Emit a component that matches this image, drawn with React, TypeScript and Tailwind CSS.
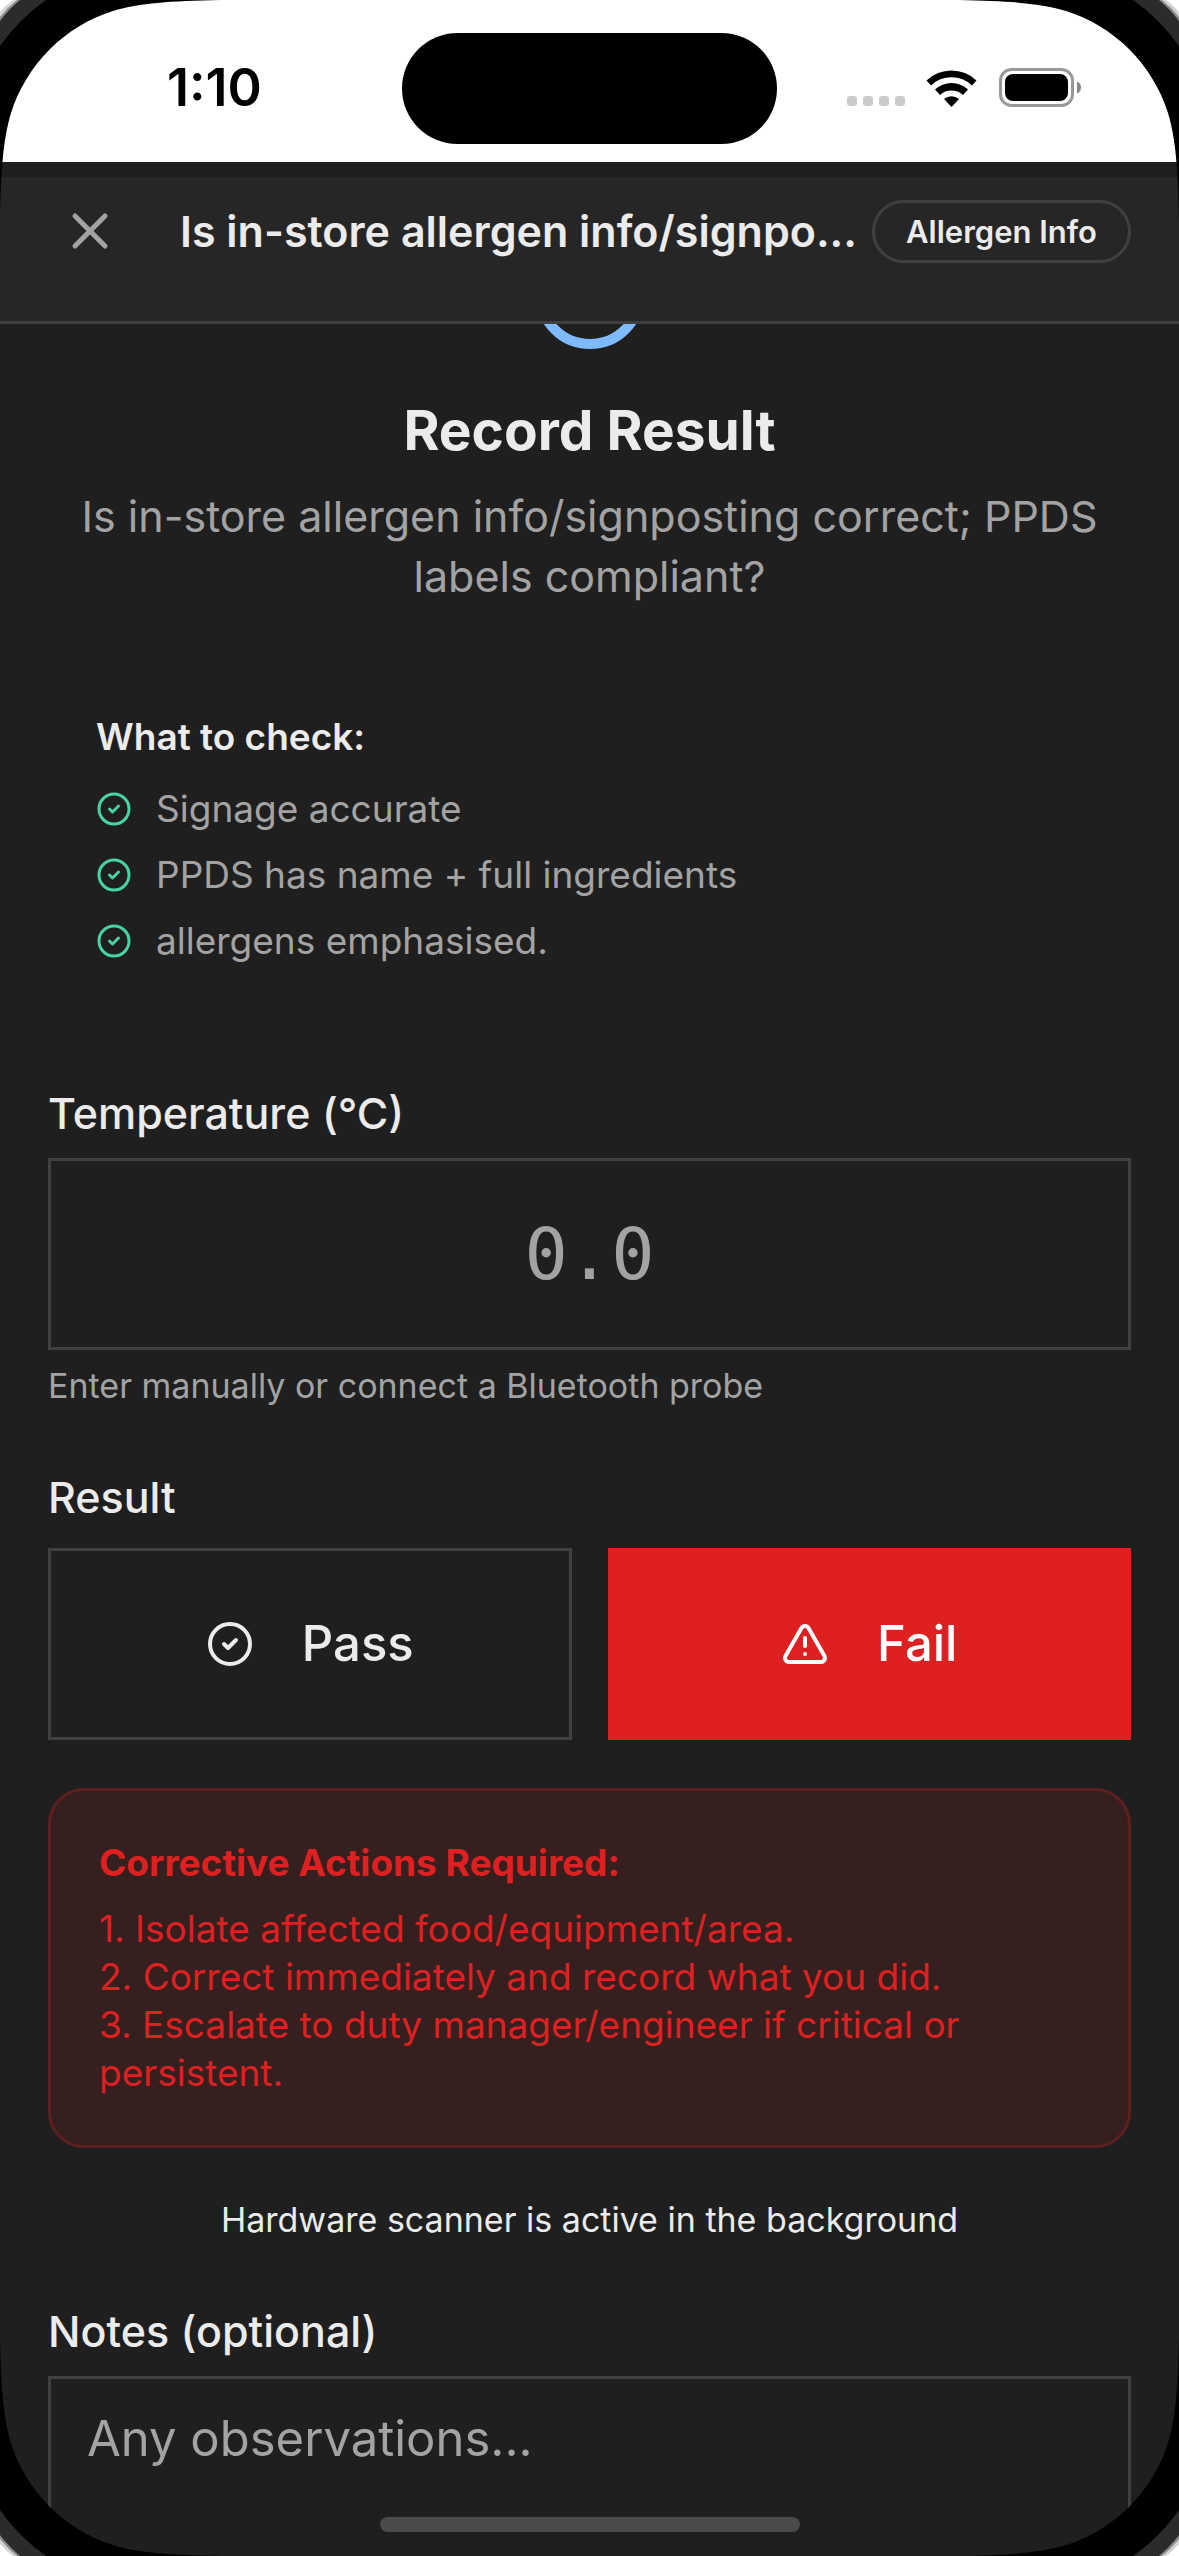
import React, { useState } from 'react'
import { CircleCheck, TriangleAlert, X } from 'lucide-react'
import { clsx } from 'clsx'

type ResultValue = 'pass' | 'fail'

const checks = ['Signage accurate', 'PPDS has name + full ingredients', 'allergens emphasised.']

const correctiveActions = [
  '1. Isolate affected food/equipment/area.',
  '2. Correct immediately and record what you did.',
  '3. Escalate to duty manager/engineer if critical or persistent.',
]

const question = 'Is in-store allergen info/signposting correct; PPDS labels compliant?'

// Keep the header title on one line next to the category pill
const shorten = (text: string, max: number) =>
  text.length > max ? `${text.slice(0, max)}...` : text

// One corner of the device frame, drawn for the top left and flipped for the others
function FrameCorner({ className }: { className: string }) {
  return (
    <svg
      viewBox="0 0 220 220"
      aria-hidden="true"
      className={clsx('pointer-events-none absolute z-20 h-[220px] w-[220px]', className)}
    >
      <path d="M0 0H220C170 1 140 3 113 11C90 18 67 32 50 49C32 67 18 90 11 113C3 140 1 170 0 220Z" fill="#000" />
      <path d="M0 0H46Q20 18 0 46Z" fill="#2b2b2b" />
      <path d="M0 0H20Q9 9 0 21Z" fill="#8a8a8a" />
      <path d="M0 0H17Q8 7 0 17Z" fill="#d4d4d4" />
      <path d="M0 0H13Q6 5 0 12Z" fill="#fff" />
    </svg>
  )
}

function WifiIcon() {
  return (
    <svg viewBox="0 0 51 38" className="h-[38px] w-[51px]" aria-hidden="true">
      <path
        d="M0.500 11.500A36 36 0 0 1 50.500 11.500L46 16.500A29.500 29.500 0 0 0 5 16.500Z"
        fill="#000"
      />
      <path d="M9 20.500A24 24 0 0 1 42 20.500L37 26A17 17 0 0 0 14 26Z" fill="#000" />
      <path d="M18 30A11.500 11.500 0 0 1 33 30L25.500 38Z" fill="#000" />
    </svg>
  )
}

function BatteryIcon() {
  return (
    <svg viewBox="0 0 83 40" className="h-10 w-[83px]" aria-hidden="true">
      <rect x="1.500" y="1.500" width="72" height="36" rx="11" fill="none" stroke="#999" strokeWidth="3" />
      <rect x="6" y="6" width="63" height="27" rx="8" fill="#000" />
      <path d="M78 13.500Q82 15 82 19.500T78 25.500Z" fill="#888" />
    </svg>
  )
}

function StatusBar() {
  return (
    <div className="grid h-[162px] shrink-0 grid-cols-[1fr_375px_1fr] items-start bg-white pt-[33px]">
      <div className="flex h-[110px] items-center pl-[167px]">
        <span className="text-[52px] leading-[60px] font-semibold text-black">1:10</span>
      </div>
      <div className="h-[111px] rounded-full bg-black" />
      <div className="flex h-[110px] items-center justify-end pr-[97px]">
        <div className="mt-[26px] mr-[21px] flex gap-[6px]">
          {[0, 1, 2, 3].map((dot) => (
            <span key={dot} className="h-[10px] w-[10px] rounded-[3px] bg-[#cccccc]" />
          ))}
        </div>
        <WifiIcon />
        <div className="ml-[22px]">
          <BatteryIcon />
        </div>
      </div>
    </div>
  )
}

export default function App() {
  const [result, setResult] = useState<ResultValue>('fail')
  const [temperature, setTemperature] = useState('')
  const [notes, setNotes] = useState('')

  return (
    <div className="relative flex h-screen flex-col overflow-hidden bg-[#1f1f1f] font-[Inter,'Liberation_Sans',sans-serif] text-[#ebebeb]">
      <StatusBar />

      <header className="mt-[15px] flex shrink-0 items-center justify-between border-b-[3px] border-[#404040] bg-[#262626] px-12 pt-3 pb-12">
        <div className="flex items-center gap-12">
          <button type="button" aria-label="Close" className="shrink-0 p-3 text-[#a3a3a3]">
            <X size={60} strokeWidth={2} />
          </button>
          <h1 className="text-[43px] leading-[60px] font-semibold whitespace-nowrap">
            {shorten(question, 32)}
          </h1>
        </div>
        <span className="shrink-0 rounded-full border-[3px] border-[#404040] px-[31px] text-[31px] leading-[57px] font-semibold">
          Allergen Info
        </span>
      </header>

      <main className="flex min-h-0 flex-1 flex-col overflow-hidden px-12">
        <div className="-mt-[90px] flex flex-col items-center text-center">
          <CircleCheck size={120} className="shrink-0 text-[#7fbaff]" />
          <h2 className="mt-[43px] text-[55px] leading-[66px] font-bold">Record Result</h2>
          <p className="mt-[23px] text-[43px] leading-[60px] text-[#a3a3a3]">{question}</p>
        </div>

        <section className="mt-[107px] px-12 text-[37px] leading-[48px]">
          <h3 className="font-semibold">What to check:</h3>
          <ul className="mt-6 flex flex-col gap-[18px] text-[#a3a3a3]">
            {checks.map((item) => (
              <li key={item} className="flex items-center gap-6">
                <CircleCheck size={36} className="shrink-0 text-[#47d4a0]" />
                {item}
              </li>
            ))}
          </ul>
        </section>

        <div className="mt-[118px] flex flex-col">
          <label htmlFor="temperature" className="text-[43px] leading-[60px] font-medium">
            Temperature (°C)
          </label>
          <input
            id="temperature"
            inputMode="decimal"
            placeholder="0.0"
            value={temperature}
            onChange={(e) => setTemperature(e.target.value)}
            className="mt-[15px] h-[192px] w-full border-[3px] border-[#404040] bg-transparent text-center font-['DejaVu_Sans_Mono','Liberation_Mono',monospace] text-[72px] outline-none placeholder:text-[#a3a3a3]"
          />
          <p className="mt-3 text-[34px] leading-[48px] text-[#a3a3a3]">
            Enter manually or connect a Bluetooth probe
          </p>
        </div>

        <div className="mt-[57px]" role="group" aria-labelledby="result-label">
          <p id="result-label" className="text-[43px] leading-[60px] font-medium">
            Result
          </p>
          <div className="mt-[21px] grid grid-cols-2 gap-9">
            <button
              type="button"
              aria-pressed={result === 'pass'}
              onClick={() => setResult('pass')}
              className={clsx(
                'flex h-[192px] items-center justify-center gap-12 border-[3px] text-[49px] font-medium',
                result === 'pass' ? 'border-[#16a34a] bg-[#16a34a] text-white' : 'border-[#404040]',
              )}
            >
              <CircleCheck size={48} />
              Pass
            </button>
            <button
              type="button"
              aria-pressed={result === 'fail'}
              onClick={() => setResult('fail')}
              className={clsx(
                'flex h-[192px] items-center justify-center gap-12 border-[3px] text-[49px] font-medium',
                result === 'fail' ? 'border-[#de2021] bg-[#de2021] text-white' : 'border-[#404040]',
              )}
            >
              <TriangleAlert size={48} />
              Fail
            </button>
          </div>
        </div>

        {result === 'fail' && (
          <section className="mt-12 rounded-[36px] border-[3px] border-[#5e1f20] bg-[#36201f] p-12 text-[37px] leading-[48px] text-[#de2021]">
            <h3 className="font-bold">Corrective Actions Required:</h3>
            <ul className="mt-[18px]">
              {correctiveActions.map((action) => (
                <li key={action}>{action}</li>
              ))}
            </ul>
          </section>
        )}

        <p className="mt-12 text-center text-[34px] leading-[48px]">
          Hardware scanner is active in the background
        </p>

        <div className="mt-[57px] flex flex-col">
          <label htmlFor="notes" className="text-[43px] leading-[60px] font-medium">
            Notes (optional)
          </label>
          <textarea
            id="notes"
            rows={4}
            placeholder="Any observations..."
            value={notes}
            onChange={(e) => setNotes(e.target.value)}
            className="mt-[15px] w-full resize-none border-[3px] border-[#404040] bg-transparent px-9 py-6 text-[49px] leading-[72px] outline-none placeholder:text-[#a3a3a3]"
          />
        </div>
      </main>

      <div className="absolute bottom-6 left-1/2 z-10 h-[15px] w-[420px] -translate-x-1/2 rounded-full bg-[#4b4b4b]" />

      <FrameCorner className="top-0 left-0" />
      <FrameCorner className="top-0 right-0 -scale-x-100" />
      <FrameCorner className="bottom-0 left-0 -scale-y-100" />
      <FrameCorner className="right-0 bottom-0 -scale-100" />
    </div>
  )
}
